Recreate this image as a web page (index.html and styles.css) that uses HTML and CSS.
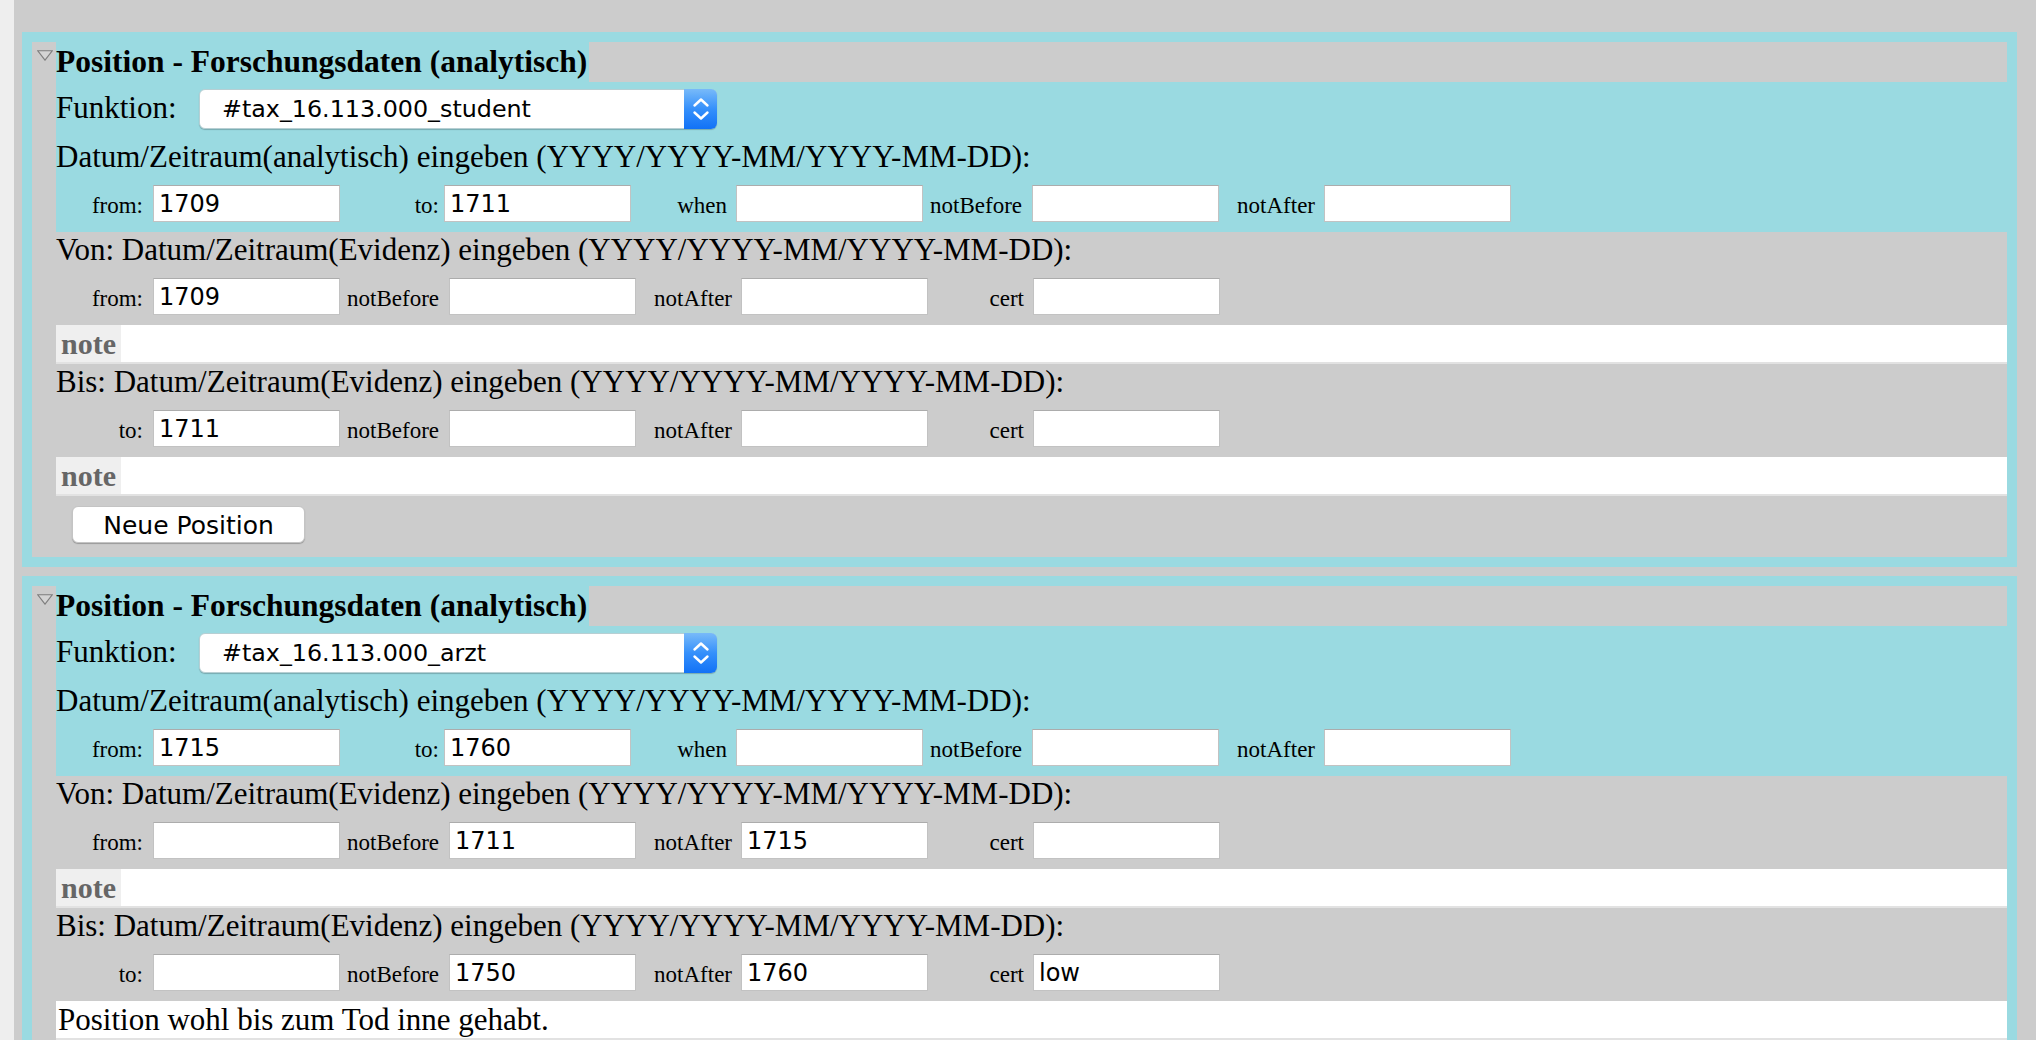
FILE: index.html
```html
<!DOCTYPE html>
<html lang="de">
<head>
<meta charset="utf-8">
<title>Position - Forschungsdaten</title>
<link rel="stylesheet" href="styles.css">
</head>
<body>
<div class="page">

  <section class="pos">
    <div class="pos-inner">
      <div class="summary">
        <span class="disclosure"><svg width="16" height="11" viewBox="0 0 16 11"><polygon points="0.8,0.8 15.2,0.8 8,10.2" fill="#d4d4d4" stroke="#7e7e7e" stroke-width="1.1"/></svg></span>
        <h3 class="pos-title">Position - Forschungsdaten (analytisch)</h3>
      </div>
      <div class="analytic">
        <div class="funk">
          <span class="funk-label">Funktion:</span>
          <div class="select">
            <select><option>#tax_16.113.000_student</option></select>
            <span class="select-arrow"><svg width="33" height="40" viewBox="0 0 33 40"><path d="M10.5 16.5 L17 10.5 L23.5 16.5 M10.5 23.5 L17 29.5 L23.5 23.5" fill="none" stroke="#fff" stroke-width="2.4" stroke-linecap="round" stroke-linejoin="round"/></svg></span>
          </div>
        </div>
        <div class="line">Datum/Zeitraum(analytisch) eingeben (YYYY/YYYY-MM/YYYY-MM-DD):</div>
        <div class="fields fields-a">
          <label class="lbl lbl-first">from:</label><input class="field" value="1709">
          <label class="lbl lbl-to">to:</label><input class="field" value="1711">
          <label class="lbl">when</label><input class="field" value="">
          <label class="lbl lbl-wide">notBefore</label><input class="field" value="">
          <label class="lbl">notAfter</label><input class="field" value="">
        </div>
      </div>
      <div class="evid">
        <div class="line">Von: Datum/Zeitraum(Evidenz) eingeben (YYYY/YYYY-MM/YYYY-MM-DD):</div>
        <div class="fields">
          <label class="lbl lbl-first">from:</label><input class="field" value="1709">
          <label class="lbl lbl-wide">notBefore</label><input class="field" value="">
          <label class="lbl">notAfter</label><input class="field" value="">
          <label class="lbl">cert</label><input class="field" value="">
        </div>
        <div class="note"><span class="note-label">note</span><span class="note-text"></span></div>
        <div class="line">Bis: Datum/Zeitraum(Evidenz) eingeben (YYYY/YYYY-MM/YYYY-MM-DD):</div>
        <div class="fields">
          <label class="lbl lbl-first">to:</label><input class="field" value="1711">
          <label class="lbl lbl-wide">notBefore</label><input class="field" value="">
          <label class="lbl">notAfter</label><input class="field" value="">
          <label class="lbl">cert</label><input class="field" value="">
        </div>
        <div class="note"><span class="note-label">note</span><span class="note-text"></span></div>
      </div>
      <button class="btn" type="button">Neue Position</button>
    </div>
  </section>

  <section class="pos">
    <div class="pos-inner">
      <div class="summary">
        <span class="disclosure"><svg width="16" height="11" viewBox="0 0 16 11"><polygon points="0.8,0.8 15.2,0.8 8,10.2" fill="#d4d4d4" stroke="#7e7e7e" stroke-width="1.1"/></svg></span>
        <h3 class="pos-title">Position - Forschungsdaten (analytisch)</h3>
      </div>
      <div class="analytic">
        <div class="funk">
          <span class="funk-label">Funktion:</span>
          <div class="select">
            <select><option>#tax_16.113.000_arzt</option></select>
            <span class="select-arrow"><svg width="33" height="40" viewBox="0 0 33 40"><path d="M10.5 16.5 L17 10.5 L23.5 16.5 M10.5 23.5 L17 29.5 L23.5 23.5" fill="none" stroke="#fff" stroke-width="2.4" stroke-linecap="round" stroke-linejoin="round"/></svg></span>
          </div>
        </div>
        <div class="line">Datum/Zeitraum(analytisch) eingeben (YYYY/YYYY-MM/YYYY-MM-DD):</div>
        <div class="fields fields-a">
          <label class="lbl lbl-first">from:</label><input class="field" value="1715">
          <label class="lbl lbl-to">to:</label><input class="field" value="1760">
          <label class="lbl">when</label><input class="field" value="">
          <label class="lbl lbl-wide">notBefore</label><input class="field" value="">
          <label class="lbl">notAfter</label><input class="field" value="">
        </div>
      </div>
      <div class="evid">
        <div class="line">Von: Datum/Zeitraum(Evidenz) eingeben (YYYY/YYYY-MM/YYYY-MM-DD):</div>
        <div class="fields">
          <label class="lbl lbl-first">from:</label><input class="field" value="">
          <label class="lbl lbl-wide">notBefore</label><input class="field" value="1711">
          <label class="lbl">notAfter</label><input class="field" value="1715">
          <label class="lbl">cert</label><input class="field" value="">
        </div>
        <div class="note"><span class="note-label">note</span><span class="note-text"></span></div>
        <div class="line">Bis: Datum/Zeitraum(Evidenz) eingeben (YYYY/YYYY-MM/YYYY-MM-DD):</div>
        <div class="fields">
          <label class="lbl lbl-first">to:</label><input class="field" value="">
          <label class="lbl lbl-wide">notBefore</label><input class="field" value="1750">
          <label class="lbl">notAfter</label><input class="field" value="1760">
          <label class="lbl">cert</label><input class="field" value="low">
        </div>
        <div class="note"><span class="note-text">Position wohl bis zum Tod inne gehabt.</span></div>
      </div>
      <button class="btn" type="button">Neue Position</button>
    </div>
  </section>

</div>
</body>
</html>
```
FILE: styles.css
```css
html, body {
  margin: 0;
  padding: 0;
}

body {
  background: #eeeeee;
  font-family: "Liberation Serif", "Times New Roman", serif;
  font-size: 31px;
  color: #000;
}

.page {
  margin-left: 14px;
  background: #cccccc;
  padding: 32px 19px 1px 8px;
  min-height: 100vh;
}

.pos {
  border: 10px solid #9adae1;
  background: #cccccc;
  margin-bottom: 9px;
}

.pos-inner {
  padding: 0 0 14px 24px;
}

.summary {
  display: flex;
  height: 40px;
  margin-left: -24px;
}

.disclosure {
  flex: none;
  width: 24px;
  box-sizing: border-box;
  padding: 8px 0 0 5px;
  line-height: 0;
}

.pos-title {
  margin: 0;
  font-size: 31.5px;
  font-weight: bold;
  line-height: 40px;
  background: #9adae1;
  padding-right: 2px;
}

.analytic {
  background: #9adae1;
}

.funk {
  display: flex;
  align-items: center;
  height: 54px;
}

.funk-label {
  flex: none;
  width: 143px;
  line-height: 36px;
  margin-top: -3px;
}

.select {
  position: relative;
  width: 518px;
  height: 40px;
}

.select select {
  -webkit-appearance: none;
  appearance: none;
  display: block;
  width: 100%;
  height: 100%;
  margin: 0;
  box-sizing: border-box;
  border: 1px solid #b7cfd3;
  border-radius: 6px;
  background: #ffffff;
  box-shadow: 0 1px 1px rgba(0, 0, 0, 0.22);
  font-family: "DejaVu Sans", sans-serif;
  font-size: 23.8px;
  color: #000;
  padding: 0 0 0 22px;
}

.select-arrow {
  position: absolute;
  top: 0;
  right: 0;
  width: 33px;
  height: 40px;
  border-radius: 0 6px 6px 0;
  background: linear-gradient(#78baf9, #3590fb 50%, #1272f6);
  line-height: 0;
}

.line {
  line-height: 42px;
}

.evid .line {
  line-height: 36px;
}

.fields {
  display: flex;
  align-items: center;
  padding: 7px 0 10px;
}

.evid .fields {
  padding: 10px 0;
}

.lbl {
  flex: none;
  width: 105px;
  box-sizing: border-box;
  padding-right: 9px;
  text-align: right;
  font-size: 23px;
  line-height: 26px;
  margin-top: 5px;
}

.lbl-first {
  width: 97px;
  padding-right: 10px;
}

.lbl-wide {
  width: 109px;
  padding-right: 10px;
}

.lbl-to {
  width: 104px;
  padding-right: 5px;
}

.field {
  flex: none;
  width: 187px;
  height: 37px;
  box-sizing: border-box;
  margin: 0;
  padding: 1px 5px 0;
  border: 1px solid rgba(0, 0, 0, 0.24);
  border-top-color: rgba(0, 0, 0, 0.32);
  background: #ffffff;
  font-family: "DejaVu Sans", sans-serif;
  font-size: 24px;
  color: #000;
  border-radius: 0;
  outline: none;
}

.note {
  display: flex;
  height: 37px;
  background: #ffffff;
  border-bottom: 2px solid #e2e2e2;
  line-height: 37px;
}

.note-label {
  background: #efefef;
  color: #666666;
  font-weight: bold;
  font-size: 30px;
  padding: 0 5px 0 5px;
}

.note-text {
  padding-left: 2px;
}

.btn {
  display: block;
  margin: 10px 0 0 16px;
  width: 233px;
  height: 37px;
  padding: 1px 0 0;
  background: #ffffff;
  border: 1px solid #c4c4c4;
  border-radius: 6px;
  box-shadow: 0 1px 1px rgba(0, 0, 0, 0.25);
  font-family: "DejaVu Sans", sans-serif;
  font-size: 25px;
  color: #000;
}
```
